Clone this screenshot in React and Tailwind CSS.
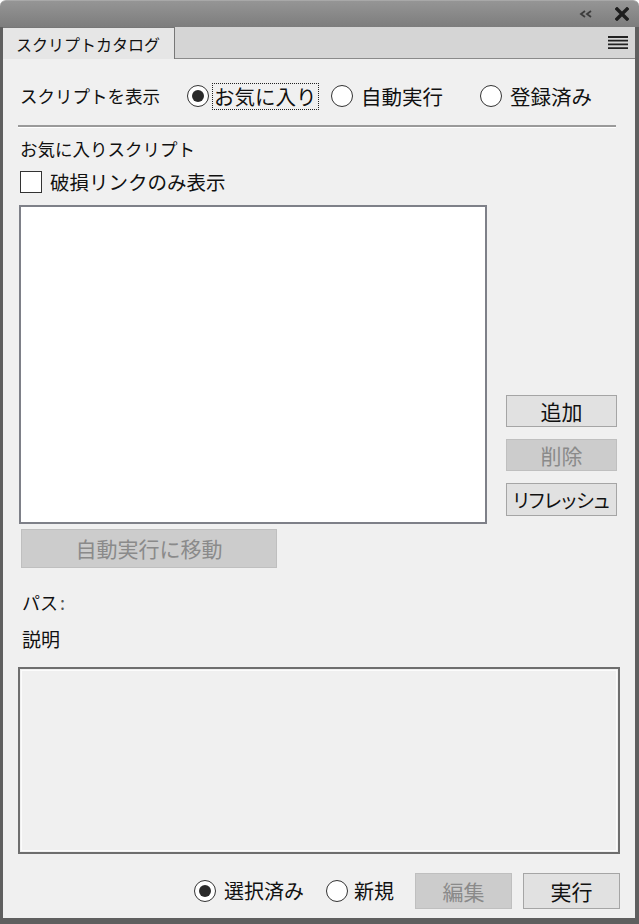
import React, { useState } from 'react';

const jp = "font-['Noto_Sans_CJK_JP','Noto_Sans',sans-serif]";

const Radio = ({ checked, onClick }) => (
  <span
    onClick={onClick}
    className="w-[22px] h-[22px] rounded-full border-[1.5px] border-[#333] bg-white flex items-center justify-center shrink-0"
  >
    {checked && <span className="w-[12px] h-[12px] rounded-full bg-[#2a2a2a]" />}
  </span>
);

const Button = ({ children, disabled, className = '' }) => (
  <button
    disabled={disabled}
    className={`flex items-center justify-center border leading-none ${
      disabled ? 'bg-[#cccccc] border-[#bfbfbf] text-[#8a8a8a]' : 'bg-[#e1e1e1] border-[#a5a5a5] text-[#111]'
    } ${className}`}
  >
    {children}
  </button>
);

export default function App() {
  const [mode, setMode] = useState('fav');
  const [runMode, setRunMode] = useState('selected');
  const [broken, setBroken] = useState(false);

  const modes = [
    { id: 'fav', label: 'お気に入り', w: 'w-[144px]' },
    { id: 'auto', label: '自動実行', w: 'w-[149px]' },
    { id: 'reg', label: '登録済み', w: 'w-auto' },
  ];

  return (
    <div className={`w-[639px] h-[924px] bg-white flex flex-col text-[#111] ${jp}`}>
      {/* Title bar */}
      <div className="h-[27px] rounded-t-[6px] bg-gradient-to-b from-[#959595] to-[#7d7d7d] border-t border-[#a8a8a8] flex items-center justify-end pr-[10px]">
        <svg width="14" height="8" viewBox="0 0 14 8" className="mr-[22px]">
          <path d="M6 1 L2 4 L6 7 M12 1 L8 4 L12 7" fill="none" stroke="#3c3c3c" strokeWidth="1.8" />
        </svg>
        <svg width="14" height="14" viewBox="0 0 14 14">
          <path d="M2 2 L12 12 M12 2 L2 12" stroke="#1e1e1e" strokeWidth="3.4" strokeLinecap="square" />
        </svg>
      </div>

      <div className="flex-1 flex flex-col bg-[#5f5f5f] pl-[3px] pr-[4px] pb-[6px]">
        {/* Tab row */}
        <div className="h-[32px] flex bg-[#d5d5d5] border-b border-[#8a8a8a]">
          <div className="w-[172px] -mb-px bg-[#e6e6e6] border-t border-r border-[#777] flex items-center pl-[13px] text-[16px]">
            スクリプトカタログ
          </div>
          <div className="flex-1 flex items-center justify-end pr-[7px]">
            <svg width="20" height="15" viewBox="0 0 20 15">
              <path d="M0 2 H20 M0 5.7 H20 M0 9.4 H20 M0 13.1 H20" stroke="#222" strokeWidth="1.8" />
            </svg>
          </div>
        </div>

        {/* Body */}
        <div className="flex-1 bg-[#f0f0f0] flex flex-col pl-[17px] pr-[15px] text-[17.5px]">
          <div className="mt-[22px] h-[30px] flex items-center">
            <span className="w-[167px]">スクリプトを表示</span>
            {modes.map((m) => (
              <div key={m.id} className={`${m.w} flex items-center`} onClick={() => setMode(m.id)}>
                <Radio checked={mode === m.id} />
                <span
                  className={`ml-[3px] px-[1px] h-[27px] flex items-center text-[20.5px] ${
                    m.id === 'fav' ? 'border border-dotted border-[#222]' : 'ml-[7px]'
                  }`}
                >
                  {m.label}
                </span>
              </div>
            ))}
          </div>

          <div className="mt-[14px] -ml-[2px] w-[598px] h-[2px] bg-[#9a9a9a] border-b border-white box-content" />

          <div className="mt-[9px] h-[24px] flex items-center">お気に入りスクリプト</div>
          <div className="mt-[9px] h-[24px] flex items-center" onClick={() => setBroken(!broken)}>
            <span className="w-[22px] h-[22px] border-[1.5px] border-[#333] bg-white flex items-center justify-center">
              {broken && <span className="text-[14px]">✓</span>}
            </span>
            <span className="ml-[8px] text-[19.5px]">破損リンクのみ表示</span>
          </div>

          <div className="mt-[11px] flex">
            <div className="w-[468px] h-[319px] -ml-[1px] bg-white border-2 border-[#7e8088]" />
            <div className="ml-[19px] flex flex-col justify-end gap-[12px] pb-[8px]">
              <Button className="w-[111px] h-[32px] text-[21px]">追加</Button>
              <Button disabled className="w-[111px] h-[32px] text-[21px]">削除</Button>
              <Button className="w-[111px] h-[33px] text-[19px] [font-feature-settings:'palt']">リフレッシュ</Button>
            </div>
          </div>

          <Button disabled className="mt-[5px] ml-[1px] w-[256px] h-[39px] text-[21px]">自動実行に移動</Button>

          <div className="mt-[22px] h-[24px] flex items-center ml-[2px] text-[18px]">
            パス<span className="text-[#555] ml-[2px]">:</span>
          </div>
          <div className="mt-[13px] h-[24px] flex items-center ml-[2px] text-[19px]">説明</div>

          <div className="mt-[16px] -ml-[2px] w-[602px] h-[187px] border-2 border-[#6e6e6e] p-px">
            <div className="w-full h-full border border-[#fcfcfc]" />
          </div>

          <div className="mt-[19px] h-[36px] flex items-center justify-end text-[20px]">
            <div className="flex items-center" onClick={() => setRunMode('selected')}>
              <Radio checked={runMode === 'selected'} />
              <span className="ml-[8px]">選択済み</span>
            </div>
            <div className="flex items-center ml-[22px]" onClick={() => setRunMode('new')}>
              <Radio checked={runMode === 'new'} />
              <span className="ml-[6px]">新規</span>
            </div>
            <Button disabled className="ml-[21px] w-[97px] h-[36px] text-[21px]">編集</Button>
            <Button className="ml-[11px] w-[97px] h-[36px] text-[21px]">実行</Button>
          </div>
        </div>
      </div>
    </div>
  );
}
